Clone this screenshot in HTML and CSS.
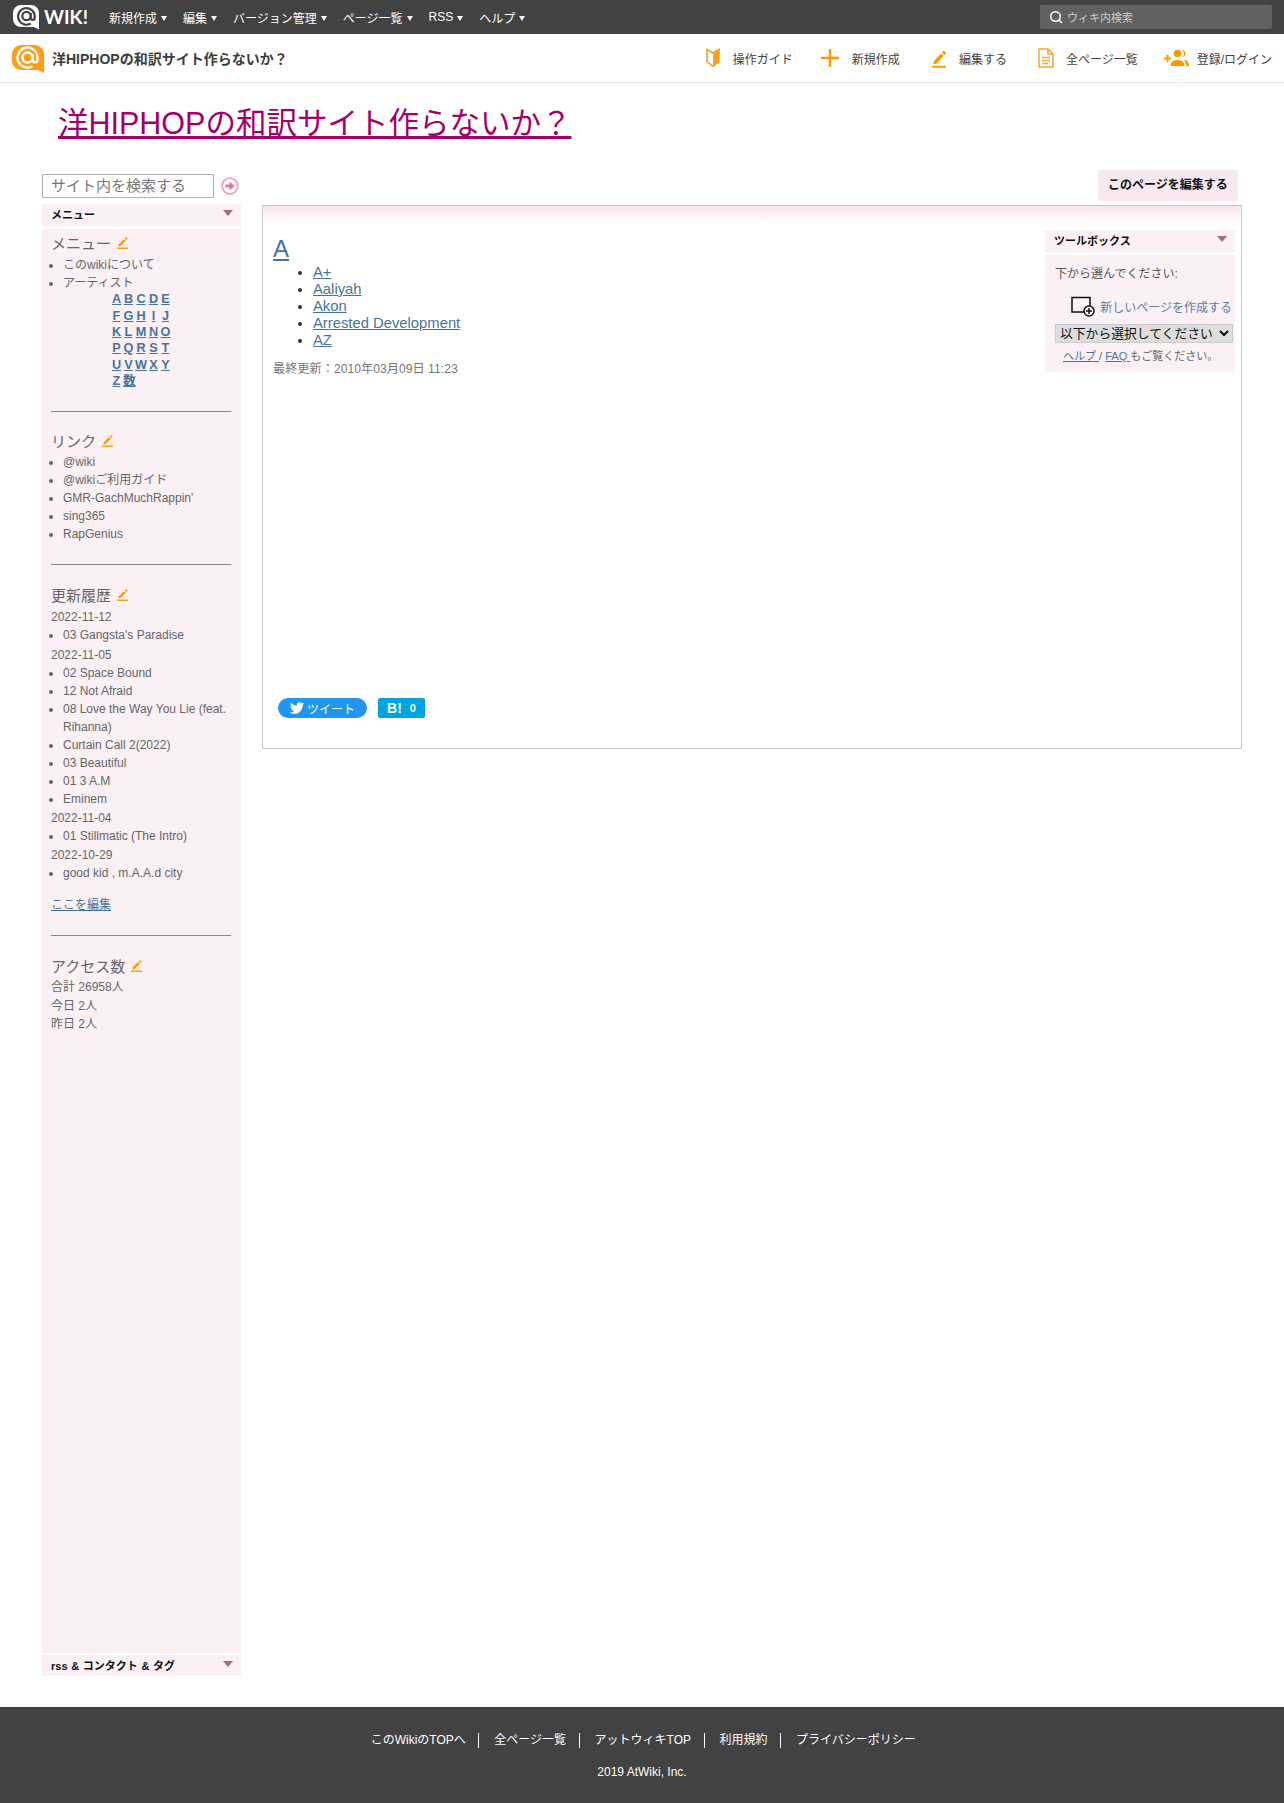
FILE: index.html
```html
<!DOCTYPE html>
<html lang="ja">
<head>
<meta charset="utf-8">
<title>洋HIPHOPの和訳サイト作らないか？</title>
<link rel="stylesheet" href="styles.css">
</head>
<body>
<header class="topbar">
  <a class="logo">
    <svg class="logo-mark" width="27" height="25" viewBox="0 0 27 25"><path d="M8 0h10a8 8 0 0 1 8 8v16.500l-5-2.500H8a8 8 0 0 1-8-8V8a8 8 0 0 1 8-8z" fill="#fff"/><g fill="none" stroke="#424242" stroke-width="2.200"><circle cx="13.500" cy="11" r="4.200"/><path d="M17.700 8v5c0 2.500 4 2.500 4 0v-2a8.300 8.300 0 1 0-4 7.500"/></g></svg>
    <span class="logo-text">WIK!</span>
  </a>
  <nav class="topnav">
    <a>新規作成<i class="caret"></i></a>
    <a>編集<i class="caret"></i></a>
    <a>バージョン管理<i class="caret"></i></a>
    <a>ページ一覧<i class="caret"></i></a>
    <a>RSS<i class="caret"></i></a>
    <a>ヘルプ<i class="caret"></i></a>
  </nav>
  <div class="topsearch">
    <svg width="14" height="14" viewBox="0 0 14 14" fill="none" stroke="#fff" stroke-width="1.500"><circle cx="6.500" cy="6.500" r="4.800"/><path d="M10 10l3 3"/></svg>
    <span>ウィキ内検索</span>
  </div>
</header>

<div class="sitebar">
  <div class="sitebar-title">
    <svg class="site-mark" width="32" height="28" viewBox="0 0 32 28"><path d="M9 0h14a9 9 0 0 1 9 9v19l-6-3H9a9 9 0 0 1-9-9V9a9 9 0 0 1 9-9z" fill="#ff9d14"/><g fill="none" stroke="#fff" stroke-width="2.400"><circle cx="15.500" cy="12.500" r="5"/><path d="M20.500 9v6c0 3 5 3 5 0v-2.500a10 10 0 1 0-5 8.700"/></g></svg>
    <strong>洋HIPHOPの和訳サイト作らないか？</strong>
  </div>
  <nav class="sitenav">
    <a class="g1"><svg width="16" height="20" viewBox="0 0 16 20"><path d="M2 1.500l6 3.500 6-3.500v12l-6 5-6-5z" fill="#fff" stroke="#fb9f22" stroke-width="1.600"/><path d="M8 5l6-3.500v12l-6 5z" fill="#fb9f22"/></svg>操作ガイド</a>
    <a class="g2"><svg width="20" height="20" viewBox="0 0 20 20"><path d="M10 1v18M1 10h18" stroke="#f90" stroke-width="2.400"/></svg>新規作成</a>
    <a class="g3"><svg width="16" height="20" viewBox="0 0 16 20"><path d="M2.500 13.500l7.500-8 2.500 2.500-7.500 8H2.500zM11 4.500l1.800-2 2.500 2.500-1.800 2z" fill="#f90"/><path d="M1 18.800h14" stroke="#f90" stroke-width="1.800"/></svg>編集する</a>
    <a class="g4"><svg width="16" height="20" viewBox="0 0 16 20" fill="none" stroke="#fba83a" stroke-width="1.600"><path d="M1 1h9l5 5v13H1zM10 1v5h5"/><path d="M4 9.500h8M4 12.500h8M4 15.500h6"/></svg>全ページ一覧</a>
    <a class="g5"><svg width="25" height="18" viewBox="0 0 25 18"><path d="M0 9.500h7M3.500 6v7" stroke="#f90" stroke-width="2"/><circle cx="13.500" cy="4.500" r="3.800" fill="#f90"/><path d="M6.500 17c0-4 3-6 7-6s7 2 7 6z" fill="#f90"/><path d="M18 1c2 0 3.500 1.500 3.500 3.500S20 8 18.500 8c1-1 1.500-2.200 1.500-3.500S19 2 18 1zM20 11c3 0 5 2 5 6h-3c0-2.500-.700-4.500-2-6z" fill="#f90"/></svg>登録/ログイン</a>
  </nav>
</div>

<h1 class="wikititle"><a>洋HIPHOPの和訳サイト作らないか？</a></h1>

<div class="columns">
  <aside class="side">
    <form class="sitesearch">
      <input class="sitesearch-input" type="text" placeholder="サイト内を検索する">
      <span class="go"><svg width="18" height="18" viewBox="0 0 18 18"><circle cx="9" cy="9" r="7.800" fill="#fff" stroke="#f0a0bc" stroke-width="1.800"/><path d="M4.500 7.500h4V4.500L13.500 9l-5 4.500v-3h-4z" fill="#ec6f9c"/></svg></span>
    </form>
    <div class="panelhead">メニュー<i class="tri"></i></div>
    <div class="panel">
      <h3>メニュー<svg class="pen" width="12" height="13" viewBox="0 0 12 13"><path d="M1.500 8.500L7 3l1.800 1.800-5.500 5.500H1.500zM7.800 2.200L9 1l1.800 1.800-1.200 1.200z" fill="#f90"/><path d="M0 12.200h11" stroke="#f90" stroke-width="1.400"/></svg></h3>
      <ul class="firstlist">
        <li>このwikiについて</li>
        <li>アーティスト</li>
      </ul>
      <table class="abc">
        <tr><td><a>A</a></td><td><a>B</a></td><td><a>C</a></td><td><a>D</a></td><td><a>E</a></td></tr>
        <tr><td><a>F</a></td><td><a>G</a></td><td><a>H</a></td><td><a>I</a></td><td><a>J</a></td></tr>
        <tr><td><a>K</a></td><td><a>L</a></td><td><a>M</a></td><td><a>N</a></td><td><a>O</a></td></tr>
        <tr><td><a>P</a></td><td><a>Q</a></td><td><a>R</a></td><td><a>S</a></td><td><a>T</a></td></tr>
        <tr><td><a>U</a></td><td><a>V</a></td><td><a>W</a></td><td><a>X</a></td><td><a>Y</a></td></tr>
        <tr><td><a>Z</a></td><td colspan="2" class="num"><a>数</a></td></tr>
      </table>
      <hr class="first">
      <h3>リンク<svg class="pen" width="12" height="13" viewBox="0 0 12 13"><path d="M1.500 8.500L7 3l1.800 1.800-5.500 5.500H1.500zM7.800 2.200L9 1l1.800 1.800-1.200 1.200z" fill="#f90"/><path d="M0 12.200h11" stroke="#f90" stroke-width="1.400"/></svg></h3>
      <ul>
        <li>@wiki</li>
        <li>@wikiご利用ガイド</li>
        <li>GMR-GachMuchRappin'</li>
        <li>sing365</li>
        <li>RapGenius</li>
      </ul>
      <hr class="mid">
      <h3>更新履歴<svg class="pen" width="12" height="13" viewBox="0 0 12 13"><path d="M1.500 8.500L7 3l1.800 1.800-5.500 5.500H1.500zM7.800 2.200L9 1l1.800 1.800-1.200 1.200z" fill="#f90"/><path d="M0 12.200h11" stroke="#f90" stroke-width="1.400"/></svg></h3>
      <div class="date">2022-11-12</div>
      <ul><li>03 Gangsta's Paradise</li></ul>
      <div class="date">2022-11-05</div>
      <ul>
        <li>02 Space Bound</li>
        <li>12 Not Afraid</li>
        <li>08 Love the Way You Lie (feat. Rihanna)</li>
        <li>Curtain Call 2(2022)</li>
        <li>03 Beautiful</li>
        <li>01 3 A.M</li>
        <li>Eminem</li>
      </ul>
      <div class="date">2022-11-04</div>
      <ul><li>01 Stillmatic (The Intro)</li></ul>
      <div class="date">2022-10-29</div>
      <ul><li>good kid , m.A.A.d city</li></ul>
      <p class="editlink"><a>ここを編集</a></p>
      <hr>
      <h3>アクセス数<svg class="pen" width="12" height="13" viewBox="0 0 12 13"><path d="M1.500 8.500L7 3l1.800 1.800-5.500 5.500H1.500zM7.800 2.200L9 1l1.800 1.800-1.200 1.200z" fill="#f90"/><path d="M0 12.200h11" stroke="#f90" stroke-width="1.400"/></svg></h3>
      <div class="count">合計 26958人</div>
      <div class="count">今日 2人</div>
      <div class="count">昨日 2人</div>
    </div>
    <div class="panelhead last">rss &amp; コンタクト &amp; タグ<i class="tri"></i></div>
  </aside>

  <main class="content">
    <div class="editbar"><a class="editbtn">このページを編集する</a></div>
    <section class="pagebox">
      <aside class="toolbox">
        <div class="panelhead tool">ツールボックス<i class="tri"></i></div>
        <div class="toolbody">
          <p class="pick">下から選んでください:</p>
          <p class="newpage"><svg width="24" height="21" viewBox="0 0 24 21" fill="none" stroke="#111" stroke-width="1.500"><path d="M14 16H1V1.500h18v9"/><circle cx="18" cy="15" r="5" fill="#fff"/><path d="M18 12v6M15 15h6"/></svg><a>新しいページを作成する</a></p>
          <select class="toolselect"><option>以下から選択してください</option></select>
          <p class="helpline"><a>ヘルプ </a>/ <a>FAQ </a>もご覧ください。</p>
        </div>
      </aside>
      <h2 class="pagehead"><a>A</a></h2>
      <ul class="artists">
        <li><a>A+</a></li>
        <li><a>Aaliyah</a></li>
        <li><a>Akon</a></li>
        <li><a>Arrested Development</a></li>
        <li><a>AZ</a></li>
      </ul>
      <p class="updated">最終更新：2010年03月09日 11:23</p>
      <div class="share">
        <a class="tweet"><svg width="14" height="12" viewBox="0 0 24 20"><path fill="#fff" d="M24 2.400c-.9.400-1.800.700-2.800.800 1-.6 1.800-1.600 2.200-2.700-1 .6-2 1-3.100 1.200C19.300.7 18 0 16.600 0c-2.700 0-4.900 2.200-4.900 4.900 0 .4 0 .8.100 1.100C7.700 5.800 4.100 3.900 1.700.9 1.200 1.600 1 2.500 1 3.400c0 1.700.9 3.200 2.200 4.100-.8 0-1.600-.2-2.200-.6v.1c0 2.400 1.700 4.400 3.900 4.800-.4.100-.8.200-1.300.2-.3 0-.6 0-.9-.1.600 2 2.400 3.400 4.600 3.400-1.700 1.300-3.800 2.100-6.100 2.100-.4 0-.8 0-1.200-.1C2.200 19.200 4.800 20 7.500 20c9.100 0 14-7.500 14-14v-.6c1-.7 1.800-1.600 2.500-3z"/></svg>ツイート</a>
        <a class="hatena"><b>B!</b><span>0</span></a>
      </div>
    </section>
  </main>
</div>

<footer class="foot">
  <nav class="footnav">
    <a>このWikiのTOPへ</a><a>全ページ一覧</a><a>アットウィキTOP</a><a>利用規約</a><a>プライバシーポリシー</a>
  </nav>
  <p class="copy">2019 AtWiki, Inc.</p>
</footer>
</body>
</html>
```
FILE: styles.css
```css
* { box-sizing: border-box; }
html, body { margin: 0; padding: 0; }
body {
  width: 1284px;
  height: 1803px;
  display: flex;
  flex-direction: column;
  font-family: "Liberation Sans", "Noto Sans CJK JP", sans-serif;
  font-size: 12px;
  color: #555;
  background: #fff;
  overflow: hidden;
}
a { color: inherit; }

/* top bar */
.topbar {
  height: 34px;
  background: #424242;
  display: flex;
  align-items: center;
  padding-left: 13px;
  color: #fff;
  flex: none;
}
.logo { display: flex; align-items: center; width: 96px; }
.logo-mark { flex: none; margin-top: 1px; }
.logo-text {
  font-family: "Lato", sans-serif;
  font-size: 19px;
  font-weight: 700;
  margin-left: 4px;
  line-height: 24px;
}
.topnav { display: flex; gap: 16px; font-size: 12px; }
.topnav a { display: flex; align-items: center; }
.caret {
  width: 0;
  height: 0;
  margin: 2px 0 0 4px;
  border-left: 3.500px solid transparent;
  border-right: 3.500px solid transparent;
  border-top: 5px solid #fff;
}
.topsearch {
  margin-left: auto;
  margin-right: 12px;
  width: 232px;
  height: 24px;
  background: #616161;
  border-radius: 2px;
  display: flex;
  align-items: center;
  gap: 4px;
  padding-left: 9px;
  font-size: 11px;
  color: #ccc;
}

/* site bar */
.sitebar {
  height: 49px;
  flex: none;
  border-bottom: 1px solid #e6e6e6;
  display: flex;
  align-items: center;
  padding: 0 12px;
  color: #424242;
}
.sitebar-title { display: flex; align-items: center; gap: 8px; font-size: 14px; }
.sitebar-title strong { color: #3c3c3c; }
.site-mark { flex: none; margin-top: 1px; }
.sitenav { margin-left: auto; display: flex; font-size: 12px; }
.sitenav a { display: flex; align-items: center; }
.sitenav svg { margin-right: 12px; }
.g1 { margin-right: 27px; }
.g2 { margin-right: 31px; }
.g3 { margin-right: 31px; }
.g4 { margin-right: 26px; }
.g5 svg { margin-right: 8px; }

/* wiki title */
.wikititle {
  margin: 19px 0 0 58px;
  height: 70px;
  font-size: 30.500px;
  font-weight: 400;
  line-height: 42px;
  color: #a3006b;
  flex: none;
}
.wikititle a { text-decoration: underline; }

/* columns */
.columns {
  display: flex;
  flex: 1;
  padding-left: 42px;
  gap: 21px;
  min-height: 0;
}
.side { width: 199px; flex: none; display: flex; flex-direction: column; }
.sitesearch { display: flex; align-items: center; height: 32px; padding-bottom: 5px; }
.sitesearch-input {
  width: 172px;
  height: 24px;
  border: 1px solid #b0b0b0;
  padding: 0 8px;
  font: 15px "Liberation Sans", "Noto Sans CJK JP", sans-serif;
  background: #fff;
}
.sitesearch-input::placeholder { color: #777; opacity: 1; }
.go { display: flex; margin-left: 7px; }
.panelhead {
  position: relative;
  height: 22px;
  background: #fbf0f4;
  color: #111;
  font-size: 11px;
  font-weight: 700;
  line-height: 22px;
  padding-left: 9px;
  flex: none;
}
.tri {
  position: absolute;
  right: 8px;
  top: 6px;
  width: 0;
  height: 0;
  border-left: 5.500px solid transparent;
  border-right: 5.500px solid transparent;
  border-top: 6px solid #a56a84;
}
.panel {
  margin-top: 3px;
  flex: 1;
  background: #fbf1f5;
  padding: 4px 10px 0 9px;
  min-height: 0;
  color: #666;
}
.panelhead.last { margin: 2px 0 0; height: 21px; word-spacing: 0.600px; }
.panel h3 {
  margin: 0;
  font-size: 15px;
  font-weight: 400;
  line-height: 22px;
  color: #666;
}
.pen { margin-left: 6px; }
.panel ul { margin: 0; padding: 0 0 0 12px; color: #666; }
.panel ul.firstlist { margin-top: 1px; }
.panel li { line-height: 18.100px; }
.abc {
  border-collapse: collapse;
  margin: -1px 0 0 60px;
  font-size: 12.700px;
  font-weight: 700;
  color: #47749f;
  text-align: center;
}
.abc td { padding: 0 1px 0 0; height: 16.300px; line-height: 16px; min-width: 12px; }
.abc a { text-decoration: underline; }
.abc .num { text-align: left; }
.panel hr {
  border: 0;
  border-top: 1px solid #888;
  margin: 24px 0 20px;
  height: 0;
}
.panel hr.first { margin: 22px 0 19px; }
.panel hr.mid { margin-top: 21px; }
.date { line-height: 18px; margin-top: 1px; }
.panel h3 + .date { margin-top: 1px; }
.editlink { margin: 14px 0 0; line-height: 18px; color: #47749f; text-decoration: underline; }
.editlink + hr { margin-top: 21px; }
.count { line-height: 18.500px; }

/* main */
.content { width: 980px; flex: none; margin-top: -2px; }
.editbar { display: flex; justify-content: flex-end; padding-right: 4px; height: 35px; }
.editbtn {
  width: 140px;
  height: 31px;
  background: #f7e9ef;
  color: #111;
  font-weight: 700;
  text-align: center;
  line-height: 31px;
  font-size: 12px;
}
.pagebox {
  height: 544px;
  border: 1px solid #ccc;
  border-top-color: #d7b9c4;
  background: linear-gradient(#fbe5ec 0, #fff 18px);
  padding: 24px 10px 0;
  color: #333;
}
.toolbox { float: right; width: 190px; margin: 0 -4px 0 0; }
.panelhead.tool { margin-top: 0; }
.toolbody {
  margin-top: 3px;
  height: 117px;
  background: #fbf0f4;
  padding: 10px 0 0 10px;
  font-size: 12px;
  color: #555;
}
.pick { margin: 0; line-height: 18px; }
.newpage {
  margin: 13px 0 0;
  display: flex;
  align-items: center;
  justify-content: flex-end;
  padding-right: 3px;
  color: #5a7fa8;
  height: 20px;
}
.newpage svg { margin-right: 5px; }
.toolselect {
  display: block;
  width: 178px;
  height: 19px;
  margin-top: 8px;
  font: 12.800px "Liberation Sans", "Noto Sans CJK JP", sans-serif;
  background: #ddd;
  color: #111;
  border: 1px solid #ccc;
  padding: 0;
}
.helpline { margin: 6px 0 0 8px; font-size: 11px; line-height: 14px; color: #666; }
.helpline a { color: #47749f; text-decoration: underline; }
.pagehead { margin: 4px 0 0; font-size: 24px; font-weight: 400; line-height: 30px; color: #47749f; }
.pagehead a { text-decoration: underline; }
.artists { margin: 0; padding: 0 0 0 40px; font-size: 14.800px; line-height: 17px; color: #333; }
.artists a { color: #47749f; text-decoration: underline; }
.updated { margin: 12px 0 0; font-size: 12.200px; line-height: 16px; color: #777; }
.share { display: flex; gap: 11px; margin-top: 321px; padding-left: 5px; }
.tweet {
  width: 89px;
  height: 20px;
  background: #2196ee;
  border-radius: 10px;
  color: #fff;
  display: flex;
  align-items: center;
  justify-content: center;
  gap: 3px;
  font-size: 12px;
}
.hatena {
  width: 47px;
  height: 20px;
  background: #00a4de;
  border-radius: 2px;
  color: #fff;
  display: flex;
  align-items: center;
  justify-content: center;
  gap: 8px;
  font-weight: 700;
  font-size: 11px;
}
.hatena b { font-size: 14px; }

/* footer */
.foot {
  height: 96px;
  flex: none;
  margin-top: 31px;
  background: #424242;
  color: #fff;
  padding-top: 26px;
  text-align: center;
}
.footnav { display: flex; justify-content: center; }
.footnav a { padding: 0 12.500px 0 15px; border-left: 1px solid #fff; line-height: 15px; }
.footnav a:first-child { border-left: 0; }
.copy { margin: 17px 0 0; line-height: 15px; }
```
